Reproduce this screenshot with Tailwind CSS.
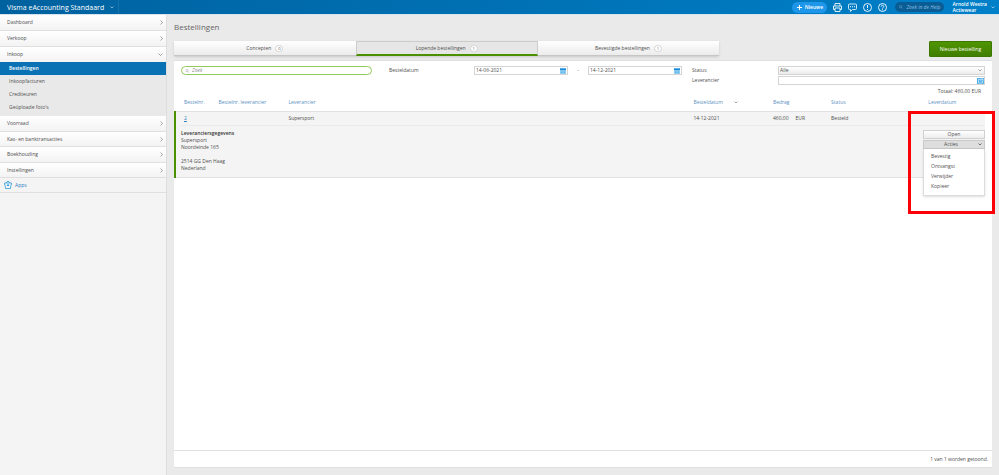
<!DOCTYPE html>
<html lang="nl">
<head>
  <meta charset="UTF-8">
  <meta name="viewport" content="width=device-width, initial-scale=1">
  <title>Bestellingen</title>
  <script src="https://cdn.jsdelivr.net/npm/@tailwindcss/browser@4"></script>
</head>
<body class="flex min-h-screen flex-col bg-[#eaeaea] font-['Open_Sans',sans-serif] text-[5px] leading-[7px] text-[#4f4f4f]">

  <!-- Top bar -->
  <header class="flex h-[15px] shrink-0 items-stretch justify-between border-b border-[#d5e4ee] bg-linear-to-r from-[#00629f] to-[#0080c9] text-white">
    <button class="flex items-center gap-[6px] border-r border-[#1a70aa] pr-1 pl-[7px] text-[7px]">
      Visma eAccounting Standaard
      <svg class="w-1" viewBox="0 0 8 6" fill="none" stroke="currentColor"><path d="M1 1l3 3 3-3"/></svg>
    </button>
    <div class="flex items-center gap-[6px]">
      <button class="flex h-[11px] w-[35px] items-center justify-center gap-[3px] rounded-full bg-[#1e96ea] font-semibold">
        <svg class="w-[5px]" viewBox="0 0 10 10" stroke="currentColor" stroke-width="2"><path d="M5 0v10M0 5h10"/></svg>
        Nieuwe
      </button>
      <button aria-label="Afdrukken">
        <svg class="w-[9px]" viewBox="0 0 18 18" fill="none" stroke="currentColor" stroke-width="1.700"><path d="M4 6V1h10v5M4 13H1V6h16v7h-3M4 10h10v7H4z"/></svg>
      </button>
      <button aria-label="Feedback">
        <svg class="w-[9px]" viewBox="0 0 18 18" fill="none" stroke="currentColor" stroke-width="1.600"><path d="M3 2h12a2 2 0 0 1 2 2v7a2 2 0 0 1-2 2H9l-4 4v-4H3a2 2 0 0 1-2-2V4a2 2 0 0 1 2-2z"/><path d="M4 7.500h2M8 7.500h2M12 7.500h2" stroke-width="2"/></svg>
      </button>
      <button aria-label="Meldingen">
        <svg class="w-[9px]" viewBox="0 0 18 18" fill="none" stroke="currentColor" stroke-width="1.800"><circle cx="9" cy="9" r="8"/><path d="M9 4v6M9 12v2"/></svg>
      </button>
      <button aria-label="Help">
        <svg class="w-[9px]" viewBox="0 0 18 18" fill="none" stroke="currentColor" stroke-width="1.800"><circle cx="9" cy="9" r="8"/><path d="M6.500 7a2.500 2.500 0 1 1 3.800 2.200C9.300 9.800 9 10 9 11M9 12.500v2"/></svg>
      </button>
      <label class="ml-[2px] flex h-[10px] w-[49px] items-center gap-[3px] rounded-full bg-[#0a5c94] pl-1">
        <svg class="w-1 shrink-0 text-[#8fc0e2]" viewBox="0 0 10 10" fill="none" stroke="currentColor"><circle cx="4" cy="4" r="3"/><path d="M6 6l3 3"/></svg>
        <input type="text" aria-label="Zoek in de Help" placeholder="Zoek in de Help" class="w-full min-w-0 italic outline-none placeholder:text-[#8fc0e2]">
      </label>
      <button class="ml-[2px] flex items-center gap-1 pr-1 text-left leading-[6px] font-semibold">
        <span>Arnold Westra<br>Actiewear</span>
        <svg class="w-1" viewBox="0 0 8 6" fill="none" stroke="currentColor"><path d="M1 1l3 3 3-3"/></svg>
      </button>
    </div>
  </header>

  <div class="flex grow">
    <!-- Navigation -->
    <nav class="w-[167px] shrink-0 border-r border-[#dedede] bg-[#f4f4f4]">
      <a href="#" class="flex h-4 items-center justify-between border-b border-[#dfdfdf] bg-linear-to-b from-white to-[#f3f3f3] pr-[3px] pl-[7px]">Dashboard
        <svg class="w-[3px]" viewBox="0 0 6 10" fill="none" stroke="currentColor"><path d="M1 1l4 4-4 4"/></svg></a>
      <a href="#" class="flex h-4 items-center justify-between border-b border-[#dfdfdf] bg-linear-to-b from-white to-[#f3f3f3] pr-[3px] pl-[7px]">Verkoop
        <svg class="w-[3px]" viewBox="0 0 6 10" fill="none" stroke="currentColor"><path d="M1 1l4 4-4 4"/></svg></a>
      <a href="#" class="flex h-[15px] items-center justify-between bg-linear-to-b from-white to-[#f3f3f3] pr-[3px] pl-[7px]">Inkoop
        <svg class="w-[5px]" viewBox="0 0 10 6" fill="none" stroke="currentColor"><path d="M1 1l4 4 4-4"/></svg></a>
      <div class="bg-[#e9e9e9] pb-[2px]">
        <a href="#" class="flex h-[13px] items-center bg-[#0872b4] px-[9px] font-semibold text-white">Bestellingen</a>
        <a href="#" class="flex h-[13px] items-center px-[9px]">Inkoopfacturen</a>
        <a href="#" class="flex h-[13px] items-center px-[9px]">Crediteuren</a>
        <a href="#" class="flex h-[13px] items-center px-[9px]">Geüploade foto's</a>
      </div>
      <a href="#" class="flex h-4 items-center justify-between border-b border-[#dfdfdf] bg-linear-to-b from-white to-[#f3f3f3] pr-[3px] pl-[7px]">Voorraad
        <svg class="w-[3px]" viewBox="0 0 6 10" fill="none" stroke="currentColor"><path d="M1 1l4 4-4 4"/></svg></a>
      <a href="#" class="flex h-[15px] items-center justify-between border-b border-[#dfdfdf] bg-linear-to-b from-white to-[#f3f3f3] pr-[3px] pl-[7px]">Kas- en banktransacties
        <svg class="w-[3px]" viewBox="0 0 6 10" fill="none" stroke="currentColor"><path d="M1 1l4 4-4 4"/></svg></a>
      <a href="#" class="flex h-4 items-center justify-between border-b border-[#dfdfdf] bg-linear-to-b from-white to-[#f3f3f3] pr-[3px] pl-[7px]">Boekhouding
        <svg class="w-[3px]" viewBox="0 0 6 10" fill="none" stroke="currentColor"><path d="M1 1l4 4-4 4"/></svg></a>
      <a href="#" class="flex h-[15px] items-center justify-between border-b border-[#dfdfdf] bg-linear-to-b from-white to-[#f3f3f3] pr-[3px] pl-[7px]">Instellingen
        <svg class="w-[3px]" viewBox="0 0 6 10" fill="none" stroke="currentColor"><path d="M1 1l4 4-4 4"/></svg></a>
      <a href="#" class="flex h-[15px] items-center gap-[3px] border-b border-[#dfdfdf] px-1 text-[#2b7fc4]">
        <svg class="w-2" viewBox="0 0 16 16" fill="none" stroke="#2fa0de" stroke-width="1.600"><path d="M1 4h14v3h-1l-1 8H3L2 7H1zM4 4l2-3h4l2 3"/><path d="M6 7h4v3H6z" fill="#2fa0de" stroke="none"/></svg>
        Apps
      </a>
    </nav>

    <main class="flex min-w-0 grow flex-col px-[7px] pb-[7px]">
      <h1 class="mt-[6px] text-[8px] leading-3 text-[#666]">Bestellingen</h1>

      <div class="mt-2 flex items-start justify-between">
        <div class="grid h-[15px] w-2/3 grid-cols-3 shadow-sm">
          <button class="flex items-center justify-center gap-1 border-b border-[#c6c6c6] bg-linear-to-b from-white to-[#ececec]">Concepten
            <span class="w-2 rounded-full border border-[#d4d4d4] bg-white text-[4px] leading-[5px]">0</span></button>
          <button class="flex items-center justify-center gap-1 border border-b-2 border-[#cccccc] border-b-[#4a9000] bg-[#e6e6e6]">Lopende bestellingen
            <span class="w-2 rounded-full border border-[#d4d4d4] bg-white text-[4px] leading-[5px]">1</span></button>
          <button class="flex items-center justify-center gap-1 border-b border-[#c6c6c6] bg-linear-to-b from-white to-[#ececec]">Bevestigde bestellingen
            <span class="w-2 rounded-full border border-[#d4d4d4] bg-white text-[4px] leading-[5px]">1</span></button>
        </div>
        <button class="h-4 w-[63px] rounded-[1px] border border-[#3d7800] bg-linear-to-b from-[#4f9400] to-[#417f00] text-white">Nieuwe bestelling</button>
      </div>

      <section class="mt-[3px] flex grow flex-col border-y border-[#e0e0e0] bg-white">
        <!-- Filters -->
        <form class="grid grid-cols-[191fr_102fr_94fr_20fr_94fr_96fr_207fr] items-center gap-y-px px-[7px] pt-[5px]">
          <label class="flex h-[9px] items-center gap-[3px] rounded-full border border-[#93c95a] pl-[3px]">
            <svg class="w-1 shrink-0" viewBox="0 0 10 10" fill="none" stroke="#888"><circle cx="5" cy="4" r="3"/><path d="M7 6l2 3"/></svg>
            <input type="text" aria-label="Zoek" placeholder="Zoek" class="w-full min-w-0 italic outline-none placeholder:text-[#888]">
          </label>
          <label for="from" class="pl-[17px]">Besteldatum</label>
          <div class="flex h-[9px] items-center border border-[#d4d4d4] pl-px">
            <input id="from" type="text" value="14-06-2021" class="w-full min-w-0 outline-none">
            <svg class="mr-px w-[6px] shrink-0" viewBox="0 0 12 12"><path d="M0 0h12v12H0z" fill="#8fcdf3"/><path d="M0 1h12v3H0z" fill="#1c8ad6"/><path d="M2 6h8M2 9h8" stroke="#3ba0e2" stroke-dasharray="2 1"/></svg>
          </div>
          <span class="text-center">-</span>
          <div class="flex h-[9px] items-center border border-[#d4d4d4] pl-px">
            <input type="text" aria-label="Besteldatum tot" value="14-12-2021" class="w-full min-w-0 outline-none">
            <svg class="mr-px w-[6px] shrink-0" viewBox="0 0 12 12"><path d="M0 0h12v12H0z" fill="#8fcdf3"/><path d="M0 1h12v3H0z" fill="#1c8ad6"/><path d="M2 6h8M2 9h8" stroke="#3ba0e2" stroke-dasharray="2 1"/></svg>
          </div>
          <label for="status" class="pl-[10px]">Status</label>
          <div class="flex h-[9px] items-center border border-[#d4d4d4] bg-linear-to-b from-white to-[#ececec] pr-[2px]">
            <select id="status" class="w-full appearance-none pl-px outline-none"><option>Alle</option></select>
            <svg class="w-1 shrink-0" viewBox="0 0 8 6" fill="none" stroke="currentColor"><path d="M1 1l3 3 3-3"/></svg>
          </div>
          <label for="supplier" class="col-start-6 pl-[10px]">Leverancier</label>
          <div class="flex h-[9px] items-center border border-[#d4d4d4]">
            <input id="supplier" type="text" class="w-full min-w-0 px-px outline-none">
            <svg class="w-[7px] shrink-0" viewBox="0 0 14 12" fill="none"><path d="M0 0h14v12H0z" fill="#4fb0ea"/><path d="M8 3H3v7h8V6M6 7l5-5M8 2h4v4" stroke="#fff"/></svg>
          </div>
        </form>
        <p class="mt-[3px] pr-[11px] text-right">Totaal: 460,00 EUR</p>

        <!-- Orders -->
        <div class="mr-[7px]">
          <table class="w-full table-fixed text-left">
            <colgroup>
              <col class="w-[5%]"><col class="w-[9%]"><col class="w-[50%]"><col class="w-[7%]"><col class="w-[5%]"><col class="w-[5%]"><col class="w-[12%]"><col class="w-[7%]">
            </colgroup>
            <thead class="text-[#5b91c2]">
              <tr class="h-4">
                <th class="pl-[9px] font-normal">Bestelnr.</th>
                <th class="pl-[3px] font-normal">Bestelnr. leverancier</th>
                <th class="font-normal">Leverancier</th>
                <th class="font-normal"><span class="flex items-center justify-between pr-3">Besteldatum
                  <svg class="w-1" viewBox="0 0 8 6" fill="none" stroke="#555"><path d="M1 1l3 3 3-3"/></svg></span></th>
                <th class="pr-px text-right font-normal">Bedrag</th>
                <th></th>
                <th class="font-normal">Status</th>
                <th class="font-normal">Leverdatum</th>
              </tr>
            </thead>
            <tbody class="border-y border-l-2 border-y-[#e0e0e0] border-l-[#4a9000] bg-[#f4f4f4]">
              <tr class="h-[14px]">
                <td class="pl-2"><a href="#" class="text-[#2b7fc4] underline">2</a></td>
                <td></td>
                <td>Supersport</td>
                <td>14-12-2021</td>
                <td class="pr-[2px] text-right">460,00</td>
                <td class="pl-[5px]">EUR</td>
                <td>Besteld</td>
                <td></td>
              </tr>
              <tr>
                <td colspan="8" class="p-0">
                  <div class="relative ml-[5px] flex h-[52px] items-start justify-between border-t border-[#ebebeb] pt-1">
                    <address class="not-italic">
                      <strong class="font-semibold text-[#333]">Leveranciersgegevens</strong><br>
                      Supersport<br>
                      Noordeinde 165<br><br>
                      2514 GG Den Haag<br>
                      Nederland
                    </address>
                    <div class="relative flex w-[62px] flex-col gap-px">
                      <button class="h-[9px] border border-[#d0d0d0] bg-linear-to-b from-white to-[#ececec]">Open</button>
                      <button class="flex h-[9px] items-center border border-[#c9c9c9] bg-[#dedede] pr-[2px]"><span class="grow">Acties</span>
                        <svg class="w-1" viewBox="0 0 8 6" fill="none" stroke="currentColor" stroke-width="1.500"><path d="M1 1l3 3 3-3"/></svg></button>
                      <ul class="absolute top-full left-0 w-full border border-t-0 border-[#dcdcdc] bg-white pt-[2px] pb-1 pl-[7px] leading-[10px] shadow-sm">
                        <li><a href="#">Bevestig</a></li>
                        <li><a href="#">Ontvangst</a></li>
                        <li><a href="#">Verwijder</a></li>
                        <li><a href="#">Kopieer</a></li>
                      </ul>
                    </div>
                    <!-- Highlight frame -->
                    <div class="pointer-events-none absolute -top-[15px] -right-[10px] h-[103px] w-[87px] border-3 border-[#fb0007]"></div>
                  </div>
                </td>
              </tr>
            </tbody>
          </table>
        </div>

        <footer class="mt-auto flex h-[17px] items-center justify-end border-t border-[#e0e0e0] pr-1">1 van 1 worden getoond.</footer>
      </section>
    </main>
  </div>
</body>
</html>
